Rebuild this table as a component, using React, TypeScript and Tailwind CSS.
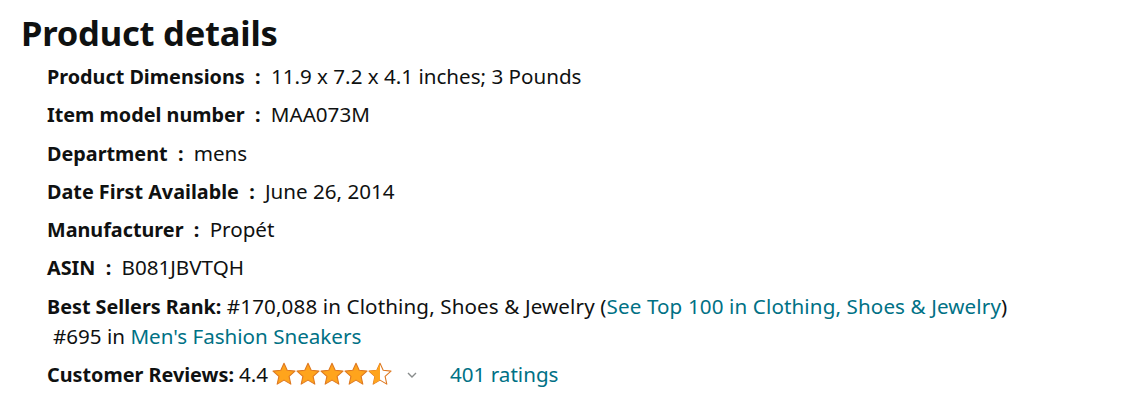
import React from 'react';

const font = { fontFamily: '"Noto Sans", "Open Sans", Arial, sans-serif' };

const starPath =
  'M12 1.2l3.2 7.1 7.8.8-5.9 5.3 1.7 7.7L12 18.1l-6.8 4 1.7-7.7L1 9.1l7.8-.8z';

function Star({ fill }: { fill: 'full' | 'half' }) {
  return (
    <svg width="24" height="24" viewBox="0 0 24 24" className="block">
      <defs>
        <clipPath id="half-clip">
          <rect x="0" y="0" width="12" height="24" />
        </clipPath>
      </defs>
      <path
        d={starPath}
        fill={fill === 'full' ? '#FFA41C' : '#fff'}
        stroke="#DE7921"
        strokeWidth="1.1"
        strokeLinejoin="round"
      />
      {fill === 'half' && (
        <path d={starPath} fill="#FFA41C" clipPath="url(#half-clip)" />
      )}
    </svg>
  );
}

const details = [
  ['Product Dimensions', '11.9 x 7.2 x 4.1 inches; 3 Pounds'],
  ['Item model number', 'MAA073M'],
  ['Department', 'mens'],
  ['Date First Available', 'June 26, 2014'],
  ['Manufacturer', 'Propét'],
  ['ASIN', 'B081JBVTQH'],
];

export default function App() {
  return (
    <div className="bg-white w-[1131px] h-[418px] text-[#0F1111]" style={font}>
      <div className="pl-[21px] pt-[10px]">
        <h2 className="text-[34.5px] font-bold leading-[46px] tracking-[-0.2px]">Product details</h2>
        <ul className="pl-[26px] pt-[6px] text-[20.6px]">
          {details.map(([label, value]) => (
            <li key={label} className="leading-[28px] mb-[10.3px]">
              <span className="font-bold text-[19.8px] leading-[20px]">{label}&nbsp; : &nbsp;</span>
              <span className="leading-[20px]">{value}</span>
            </li>
          ))}
          <li className="leading-[28px] mb-[10.6px] tracking-[0.12px]">
            <span className="font-bold text-[19.8px] leading-[20px] tracking-normal">Best Sellers Rank:</span>{' '}
            <span className="leading-[20px]">#170,088 in Clothing, Shoes &amp; Jewelry (</span>
            <a className="text-[#007185] leading-[20px]">See Top 100 in Clothing, Shoes &amp; Jewelry</a>
            <span className="leading-[20px]">)</span>
            <ul className="pl-[6px] mt-[2px] tracking-normal">
              <li>
                #695 in <a className="text-[#007185]">Men's Fashion Sneakers</a>
              </li>
            </ul>
          </li>
          <li className="h-[28px] flex items-center">
            <span className="font-bold text-[19.8px]">Customer Reviews:</span>
            <span className="ml-[5px]">4.4</span>
            <span className="flex ml-[4px]">
              <Star fill="full" />
              <Star fill="full" />
              <Star fill="full" />
              <Star fill="full" />
              <Star fill="half" />
            </span>
            <svg width="12" height="8" viewBox="0 0 12 8" className="ml-[14px] mt-[1px]">
              <path d="M2 2l4 4 4-4" fill="none" stroke="#888C8C" strokeWidth="1.4" />
            </svg>
            <a className="text-[#007185] ml-[32px]">401 ratings</a>
          </li>
        </ul>
      </div>
    </div>
  );
}
